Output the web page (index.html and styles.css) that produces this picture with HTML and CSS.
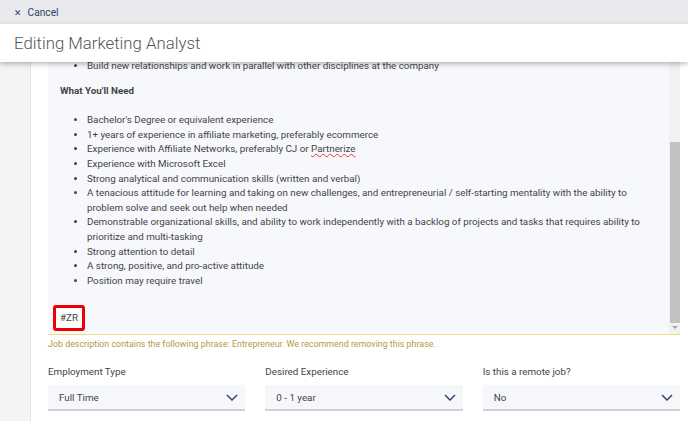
FILE: index.html
```html
<!DOCTYPE html>
<html lang="en">
<head>
    <meta charset="UTF-8">
    <meta name="viewport" content="width=device-width, initial-scale=1.0">
    <title>Editing Marketing Analyst</title>
    <link rel="stylesheet" href="styles.css">
</head>
<body>

    <div class="topbar">
        <a class="cancel" href="#"><span class="x">&#x2715;</span> Cancel</a>
    </div>
    <div class="header">
        <h1>Editing Marketing Analyst</h1>
    </div>

    <div class="page">
        <div class="side"></div>
        <div class="main">
            <div class="editor">
                <div class="editor-content">
                    <ul class="first">
                        <li>Build new relationships and work in parallel with other disciplines at the company</li>
                    </ul>
                    <p class="heading">What You'll Need</p>
                    <ul>
                        <li>Bachelor's Degree or equivalent experience</li>
                        <li>1+ years of experience in affiliate marketing, preferably ecommerce</li>
                        <li>Experience with Affiliate Networks, preferably CJ or <span class="spell">Partnerize</span></li>
                        <li>Experience with Microsoft Excel</li>
                        <li>Strong analytical and communication skills (written and verbal)</li>
                        <li>A tenacious attitude for learning and taking on new challenges, and entrepreneurial / self-starting mentality with the ability to problem solve and seek out help when needed</li>
                        <li>Demonstrable organizational skills, and ability to work independently with a backlog of projects and tasks that requires ability to prioritize and multi-tasking</li>
                        <li>Strong attention to detail</li>
                        <li>A strong, positive, and pro-active attitude</li>
                        <li>Position may require travel</li>
                    </ul>
                    <p class="tag-line"><span class="tag">#ZR</span></p>
                </div>
                <div class="scrollbar">
                    <div class="thumb"></div>
                    <div class="arrow"></div>
                </div>
            </div>
            <p class="warning">Job description contains the following phrase: Entrepreneur. We recommend removing this phrase.</p>

            <div class="fields">
                <div class="field">
                    <label>Employment Type</label>
                    <div class="select">
                        <span>Full Time</span>
                        <svg width="12" height="7" viewBox="0 0 12 7"><path d="M1 1l5 5 5-5" fill="none" stroke="#33456d" stroke-width="1.5"/></svg>
                    </div>
                </div>
                <div class="field">
                    <label>Desired Experience</label>
                    <div class="select">
                        <span>0 - 1 year</span>
                        <svg width="12" height="7" viewBox="0 0 12 7"><path d="M1 1l5 5 5-5" fill="none" stroke="#33456d" stroke-width="1.5"/></svg>
                    </div>
                </div>
                <div class="field">
                    <label>Is this a remote job?</label>
                    <div class="select">
                        <span>No</span>
                        <svg width="12" height="7" viewBox="0 0 12 7"><path d="M1 1l5 5 5-5" fill="none" stroke="#33456d" stroke-width="1.5"/></svg>
                    </div>
                </div>
            </div>
        </div>
    </div>

</body>
</html>
```

FILE: styles.css
```css
body {
    margin: 0;
    font-family: Roboto, "Liberation Sans", sans-serif;
    color: #444;
    background: #fff;
    overflow: hidden;
}
.topbar {
    height: 24px;
    background-color: #e9eaee;
    display: flex;
    align-items: center;
    padding-left: 14px;
}
.cancel {
    color: #2f4169;
    text-decoration: none;
    font-size: 10.2px;
}
.cancel .x {
    font-size: 9px;
    margin-right: 3px;
}
.header {
    position: relative;
    z-index: 2;
    height: 38px;
    background: #fff;
    box-shadow: 0 2px 5px rgba(0, 0, 0, 0.28);
    display: flex;
    align-items: center;
    padding-left: 14px;
}
.header h1 {
    margin: 0;
    font-size: 16.8px;
    font-weight: 300;
    color: #555;
}
.page {
    display: flex;
    height: 359px;
}
.side {
    width: 30px;
    background: #f4f4f6;
    border-right: 1px solid #e3e3e6;
}
.main {
    flex: 1;
    padding-left: 17px;
    padding-right: 8px;
}
.editor {
    display: flex;
    height: 272px;
    background: #f7f8fc;
    border-bottom: 1px solid #f6d98a;
    overflow: hidden;
}
.editor-content {
    flex: 1;
    font-size: 9.8px;
    line-height: 14.6px;
    margin-top: -3px;
    padding-right: 12px;
}
.editor-content ul {
    margin: 0;
    padding-left: 39px;
}
.heading {
    font-weight: bold;
    margin: 10px 0 15px 12px;
}
.spell {
    text-decoration: underline wavy #e33;
    text-decoration-thickness: 1px;
}
.tag-line {
    margin: 17px 0 0 5px;
}
.tag {
    display: inline-block;
    border: 3px solid #e00;
    border-radius: 3px;
    padding: 3px 4px;
    line-height: 14px;
    background: #fff;
}
.scrollbar {
    width: 11px;
    background: #f1f1f1;
    display: flex;
    flex-direction: column;
    align-items: center;
}
.thumb {
    width: 10px;
    height: 181px;
    margin-top: 80px;
    background: #c1c1c1;
}
.arrow {
    margin-top: 3px;
    width: 0;
    height: 0;
    border-left: 3px solid transparent;
    border-right: 3px solid transparent;
    border-top: 3px solid #a3a3a3;
}
.warning {
    margin: 4px 0 0;
    font-size: 8.9px;
    color: #b49a3f;
}
.fields {
    display: grid;
    grid-template-columns: repeat(3, 1fr);
    column-gap: 20px;
    margin-top: 17px;
}
.field label {
    display: block;
    font-size: 9.8px;
    color: #444;
    margin-bottom: 8px;
}
.select {
    height: 24px;
    background: #f6f7fb;
    border-bottom: 2px solid #d0d1d5;
    display: flex;
    align-items: center;
    justify-content: space-between;
    padding: 0 7px 0 11px;
    font-size: 9.8px;
    color: #444;
}
```
